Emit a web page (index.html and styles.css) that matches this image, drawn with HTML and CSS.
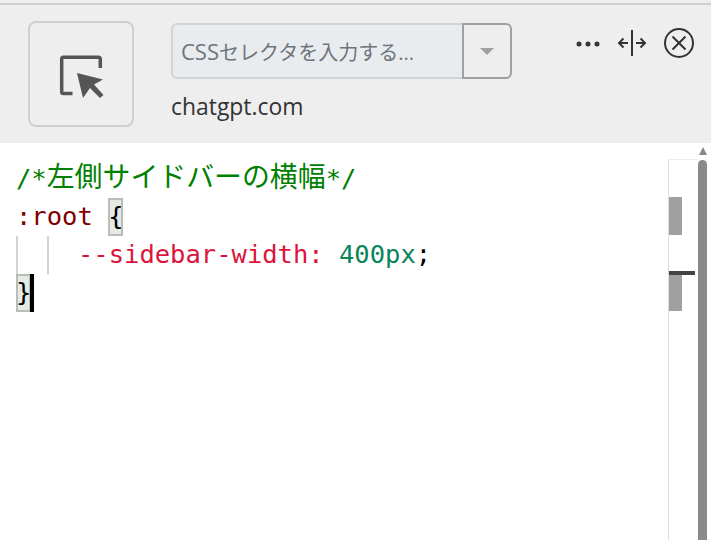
FILE: index.html
```html
<!DOCTYPE html>
<html lang="ja">
<head>
<meta charset="utf-8">
<title>CSS Editor</title>
<link rel="stylesheet" href="styles.css">
</head>
<body>
<div class="app">
  <header class="header">
    <button class="pick" type="button" aria-label="要素を選択">
      <svg width="50" height="50" viewBox="0 0 50 50">
        <path class="pick-frame" d="M16.500 44.500H7.500a1.800 1.800 0 0 1-1.800-1.800V10a1.800 1.800 0 0 1 1.800-1.800h35a1.800 1.800 0 0 1 1.800 1.800v9"/>
        <path class="pick-arrow" d="M21 24L47 30.500L38 35.500L47.500 46L44 49L34 39L27 49Z"/>
      </svg>
    </button>
    <div class="selector">
      <div class="combo">
        <div class="combo-input"><span class="ph-latin">CSS</span>セレクタを入力する...</div>
        <button class="combo-btn" type="button" aria-label="開く"><span class="caret"></span></button>
      </div>
      <div class="site">chatgpt.com</div>
    </div>
    <div class="tools">
      <svg class="tool-more" width="24" height="8" viewBox="0 0 24 8"><circle cx="3" cy="4" r="2.500"/><circle cx="12" cy="4" r="2.500"/><circle cx="21" cy="4" r="2.500"/></svg>
      <svg class="tool-split" width="30" height="26" viewBox="0 0 30 26"><path d="M15 0V26M11 13H2M6.500 8.500L2 13L6.500 17.500M19 13H28M23.500 8.500L28 13L23.500 17.500"/></svg>
      <svg class="tool-close" width="30" height="30" viewBox="0 0 30 30"><circle cx="15" cy="15" r="14"/><path d="M8.500 8.500L21.500 21.500M21.500 8.500L8.500 21.500"/></svg>
    </div>
  </header>
  <main class="editor">
    <div class="code">
      <div class="line tok-comment">/*<span class="cjk">左側サイドバーの横幅</span>*/</div>
      <div class="line"><span class="tok-sel">:root</span> <span class="bracket">{</span></div>
      <div class="line line-indent"><span class="guide"></span><span class="guide"></span><span class="tok-prop">--sidebar-width:</span> <span class="tok-num">400px</span>;</div>
      <div class="line"><span class="bracket">}</span><span class="cursor"></span></div>
    </div>
    <aside class="overview">
      <span class="mark mark-a"></span>
      <span class="mark mark-b"></span>
      <span class="mark-line"></span>
    </aside>
    <div class="scrollbar">
      <span class="scroll-up"></span>
      <span class="scroll-thumb"></span>
    </div>
  </main>
</div>
</body>
</html>
```
FILE: styles.css
```css
* { box-sizing: border-box; }
html, body { margin: 0; height: 100%; background: #fff; }
body { overflow: hidden; }
.app { width: 711px; height: 540px; display: flex; flex-direction: column; padding-top: 3px; background: #eeeeee; }
.header {
  height: 140px;
  background: #eeeeee;
  border-top: 2px solid #cfcfcf;
  display: flex;
  padding: 16px 0 0 28px;
  font-family: "Open Sans", "Noto Sans CJK JP", sans-serif;
}
.pick {
  width: 106px; height: 106px; padding: 0;
  border: 2px solid #cfcfcf; border-radius: 8px; background: #eeeeee;
  display: flex; align-items: center; justify-content: center;
}
.pick-frame { fill: none; stroke: #555; stroke-width: 3.500; }
.pick-arrow { fill: #555; }
.selector { margin: 2px 0 0 37px; width: 341px; }
.combo { display: flex; height: 56px; }
.combo-input {
  width: 291px; height: 56px; padding: 0 8px;
  background: #e9ecef; color: #6c757d;
  border: 2px solid #ced4da; border-right: 0;
  border-radius: 6px 0 0 6px;
  font-size: 20px; line-height: 52px;
  white-space: nowrap;
}
.ph-latin { font-size: 22px; }
.combo-btn {
  flex: 1; padding: 0; background: #eeeeee;
  border: 2px solid #a0a0a0; border-radius: 0 6px 6px 0;
  display: flex; align-items: center; justify-content: center;
}
.caret { width: 0; height: 0; border: 7.500px solid transparent; border-top: 7.500px solid #a0a0a0; border-bottom: 0; }
.site { margin-top: 12px; font-size: 22.900px; line-height: 32px; color: #333; }
.tools { margin: 9px 0 0 64px; display: flex; align-items: center; height: 26px; }
.tool-more { fill: #333; margin-top: 2px; }
.tool-split { margin-left: 17px; fill: none; stroke: #333; stroke-width: 2; }
.tool-close { margin-left: 17px; fill: none; stroke: #333; stroke-width: 2; }
.editor { flex: 1; display: flex; min-height: 0; padding: 16px 4px 0 16px; background: #fff; }
.code {
  flex: 1; min-width: 0; margin-top: 1px;
  font: 25.500px "DejaVu Sans Mono", monospace;
  color: #000;
}
.line { height: 38px; line-height: 36px; white-space: pre; position: relative; }
.cjk { font-family: "Noto Sans CJK JP", sans-serif; font-size: 27.900px; line-height: 30px; }
.tok-comment { color: #008000; }
.tok-sel { color: #800000; }
.tok-prop { color: #dc143c; }
.tok-num { color: #098658; }
.bracket { display: inline-block; height: 38px; background: #e4ebe4; outline: 2px solid #b9bdb9; outline-offset: -2px; vertical-align: top; }
.line-indent { padding-left: 62px; }
.guide { position: absolute; top: 0; bottom: 0; width: 2px; background: #d3d3d3; }
.guide:nth-child(1) { left: 0; }
.guide:nth-child(2) { left: 31px; }
.cursor { display: inline-block; width: 4px; height: 38px; margin-left: -1px; background: #000; vertical-align: top; }
.overview { width: 30px; position: relative; border-left: 1px solid #ddd; border-top: 1px solid #eee; }
.mark { position: absolute; left: 0; width: 13px; height: 38px; background: #a0a0a0; }
.mark-a { top: 37px; }
.mark-b { top: 113px; }
.mark-line { position: absolute; left: 0; top: 111px; width: 26px; height: 4px; background: #444; }
.scrollbar { width: 9px; margin-top: -12px; display: flex; flex-direction: column; align-items: center; }
.scroll-up { width: 0; height: 8px; border: 4.500px solid transparent; border-bottom: 8px solid #888; border-top: 0; margin-bottom: 5px; }
.scroll-thumb { flex: 1; width: 9px; background: #8a8a8a; border-radius: 5px 5px 0 0; }
```
